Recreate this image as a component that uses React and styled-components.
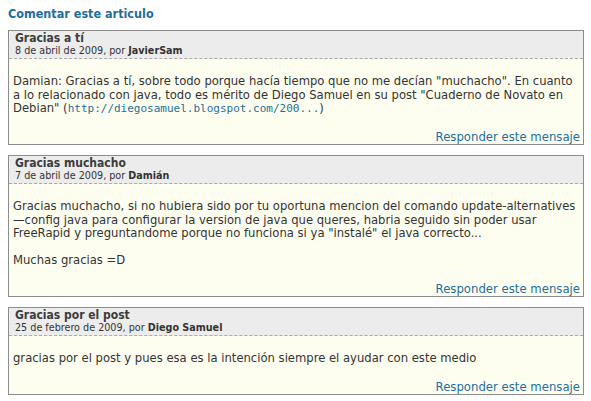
import React from "react";
import styled, { createGlobalStyle } from "styled-components";

const GlobalStyle = createGlobalStyle`
  body {
    margin: 0;
    padding: 6px 7px 6px 8px;
    background: #fff;
    font-family: "DejaVu Sans", Verdana, sans-serif;
    color: #333;
  }
`;

const Heading = styled.h2`
  margin: 0 0 8px;
  font-family: "DejaVu Sans Condensed", "DejaVu Sans", sans-serif;
  font-size: 12.5px;
  font-weight: bold;
  color: #1e6e9c;
  line-height: 16px;
`;

const Comment = styled.div`
  border: 1px solid #8c8c8c;
  margin-bottom: 10px;
`;

const CommentHeader = styled.div`
  background: #ececec;
  border-bottom: 1px dashed #aaa;
  padding: 1px 6px 1px;
  font-family: "DejaVu Sans Condensed", "DejaVu Sans", sans-serif;
`;

const Title = styled.div`
  font-size: 12px;
  font-weight: bold;
  color: #3c3c3c;
  line-height: 13px;
`;

const Meta = styled.div`
  font-size: 10.7px;
  color: #333;
  line-height: 12px;
  strong {
    font-weight: bold;
  }
`;

const CommentBody = styled.div`
  background: #fefef0;
  padding: 16px 3px 0 4px;
  font-size: 11.6px;
  line-height: 13.5px;
  display: flex;
  flex-direction: column;
  p {
    margin: 0 0 13.5px;
  }
`;

const NoWrap = styled.span`
  white-space: nowrap;
`;

const BodyLink = styled.a`
  color: #1e6e9c;
  text-decoration: none;
  font-family: "DejaVu Sans Mono", monospace;
  font-size: 11px;
`;

const Reply = styled.a`
  align-self: flex-end;
  color: #1e6e9c;
  text-decoration: none;
  margin-top: 2px;
  font-size: 11.7px;
  line-height: 13px;
`;

const comments = [
  {
    title: "Gracias a tí",
    date: "8 de abril de 2009",
    author: "JavierSam",
    body: (
      <p>
        Damian: Gracias a tí, sobre todo porque hacía tiempo que no me decían
        "muchacho". En cuanto <NoWrap>a lo</NoWrap> relacionado con java, todo
        es mérito de Diego Samuel en su post "Cuaderno de Novato en Debian" (
        <BodyLink href="#">http://diegosamuel.blogspot.com/200...</BodyLink>)
      </p>
    ),
  },
  {
    title: "Gracias muchacho",
    date: "7 de abril de 2009",
    author: "Damián",
    body: (
      <>
        <p>
          Gracias muchacho, si no hubiera sido por tu oportuna mencion del
          comando <NoWrap>update-alternatives</NoWrap>{" "}
          <NoWrap>—config</NoWrap> java para configurar la version de java que
          queres, habria seguido sin poder usar FreeRapid y preguntandome
          porque no funciona si ya "instalé" el java correcto...
        </p>
        <p>Muchas gracias =D</p>
      </>
    ),
  },
  {
    title: "Gracias por el post",
    date: "25 de febrero de 2009",
    author: "Diego Samuel",
    body: (
      <p>
        gracias por el post y pues esa es la intención siempre el ayudar con
        este medio
      </p>
    ),
  },
];

export default function App() {
  return (
    <>
      <GlobalStyle />
      <Heading>Comentar este articulo</Heading>
      {comments.map((c) => (
        <Comment key={c.title}>
          <CommentHeader>
            <Title>{c.title}</Title>
            <Meta>
              {c.date}, por <strong>{c.author}</strong>
            </Meta>
          </CommentHeader>
          <CommentBody>
            {c.body}
            <Reply href="#">Responder este mensaje</Reply>
          </CommentBody>
        </Comment>
      ))}
    </>
  );
}
